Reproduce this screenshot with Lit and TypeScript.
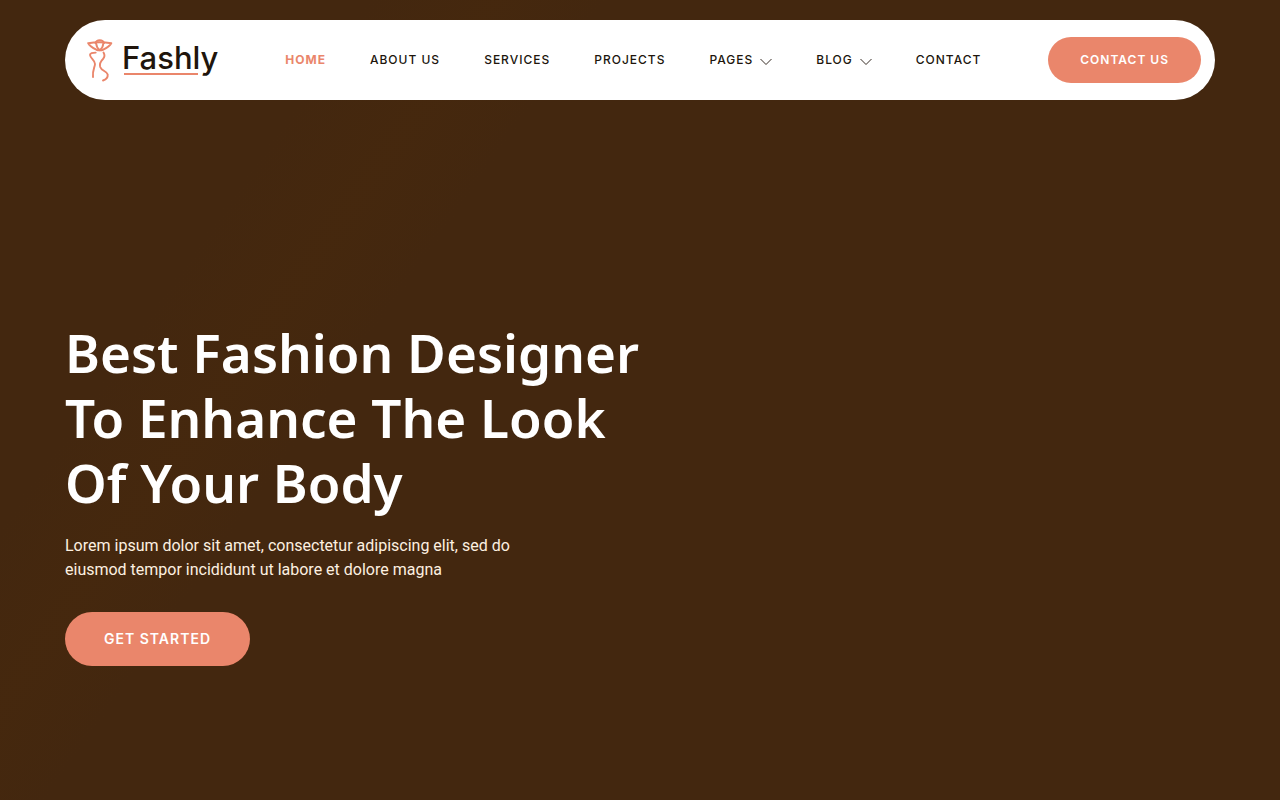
import { LitElement, html, css, svg, nothing } from "lit";
import { customElement } from "lit/decorators.js";

interface NavItem {
  label: string;
  current?: boolean;
  menu?: boolean;
}

const NAV: NavItem[] = [
  { label: "Home", current: true },
  { label: "About us" },
  { label: "Services" },
  { label: "Projects" },
  { label: "Pages", menu: true },
  { label: "Blog", menu: true },
  { label: "Contact" },
];

const figure = svg`
  <g fill="none" stroke="#ea866b" stroke-width="1.9" stroke-linecap="round" stroke-linejoin="round">
    <path d="M8.500 4.200C9.500 0.200 16 0.200 17 4.200" />
    <path d="M1.200 4.200C7 3.200 18 3.200 24.300 4.200C22.500 7.500 19.500 9 16 10.800C14.500 11.600 11 11.600 9.500 10.800C6 9 3 7.500 1.200 4.200Z" />
    <path d="M9.200 4.500C9.500 8 11 10 12.800 11.200C14.500 10 16 8 16.300 4.500" />
    <path d="M8.700 13.600C5.500 13.600 2.800 14 3 16C3.300 19.500 8.200 21 8 25C7.800 28.500 5.300 31 6 38" />
    <path d="M16.500 13.600C18 16 17.800 18 16 20C13.500 22.500 12.300 25 13.200 28C14.500 32 20 32 20.700 35.500C21 38.500 19 40.500 16 41.500" />
  </g>
`;

@customElement("app-root")
export class AppRoot extends LitElement {
  static styles = css`
    :host {
      display: block;
      font-family: Inter, "Liberation Sans", sans-serif;
      color: #fff;
    }
    .page {
      box-sizing: border-box;
      min-height: 100vh;
      padding: 20px 24px 64px;
      background:
        linear-gradient(125deg, transparent 20%, rgba(72, 41, 12, 0.4) 27%, transparent 33%),
        #43270f;
    }
    .wrap {
      max-width: 1150px;
      margin: 0 auto;
    }
    a {
      color: inherit;
      text-decoration: none;
    }
    .bar {
      display: flex;
      align-items: center;
      justify-content: space-between;
      box-sizing: border-box;
      min-height: 80px;
      padding: 0 14px 0 22px;
      border-radius: 40px;
      background: #fff;
      color: #20150c;
    }
    .logo {
      display: flex;
      align-items: center;
      gap: 9px;
    }
    .figure {
      width: 26px;
      height: 43px;
    }
    .name {
      position: relative;
      padding-bottom: 4px;
      font-size: 31px;
      line-height: 38px;
      font-weight: 500;
    }
    .name::after {
      content: "";
      position: absolute;
      left: 2px;
      right: 20px;
      bottom: 6px;
      height: 2px;
      background: #ea866b;
    }
    .links {
      display: flex;
      gap: 44px;
      margin: 0;
      padding: 0;
      list-style: none;
    }
    .link {
      display: flex;
      align-items: center;
      gap: 7px;
      font-size: 12px;
      line-height: 20px;
      font-weight: 500;
      letter-spacing: 1px;
      text-transform: uppercase;
    }
    .current {
      color: #ea866b;
      font-weight: 700;
    }
    .chevron {
      width: 12px;
      height: 12px;
      padding-top: 4px;
    }
    .button {
      display: inline-block;
      border: 0;
      border-radius: 40px;
      background: #ea866b;
      color: #fff;
      font-family: inherit;
      font-weight: 600;
      letter-spacing: 1px;
      text-transform: uppercase;
    }
    .small {
      padding: 13px 32px;
      font-size: 12px;
      line-height: 20px;
    }
    .large {
      padding: 17px 39px;
      font-size: 14px;
      line-height: 20px;
    }
    .hero {
      padding-top: 220px;
    }
    .title {
      max-width: 600px;
      margin: 0 0 19px;
      font-family: "Noto Sans", sans-serif;
      font-size: 53px;
      line-height: 65px;
      font-weight: 600;
    }
    .lead {
      max-width: 460px;
      margin: 0 0 30px;
      font-family: Roboto, sans-serif;
      font-size: 16px;
      line-height: 24px;
      color: #fdf0e0;
    }
  `;

  render() {
    return html`
      <div class="page">
        <header class="wrap bar">
          <a class="logo" href="#">
            <svg class="figure" viewBox="0 0 26 43" aria-hidden="true">${figure}</svg>
            <span class="name">Fashly</span>
          </a>
          <nav>
            <ul class="links">
              ${NAV.map(
                (item) => html`<li>
                  <a class="link ${item.current ? "current" : ""}" href="#"
                    >${item.label}${item.menu
                      ? html`<svg class="chevron" viewBox="0 0 12 12" aria-hidden="true">
                          <path d="M0.500 3L6 8.500L11.500 3" fill="none" stroke="#20150c" stroke-width="0.900" />
                        </svg>`
                      : nothing}</a
                  >
                </li>`
              )}
            </ul>
          </nav>
          <button class="button small" type="button">Contact us</button>
        </header>
        <main class="wrap hero">
          <h1 class="title">Best Fashion Designer To Enhance The Look Of Your Body</h1>
          <p class="lead">
            Lorem ipsum dolor sit amet, consectetur adipiscing elit, sed do eiusmod tempor incididunt ut labore et
            dolore magna
          </p>
          <button class="button large" type="button">Get started</button>
        </main>
      </div>
    `;
  }
}
